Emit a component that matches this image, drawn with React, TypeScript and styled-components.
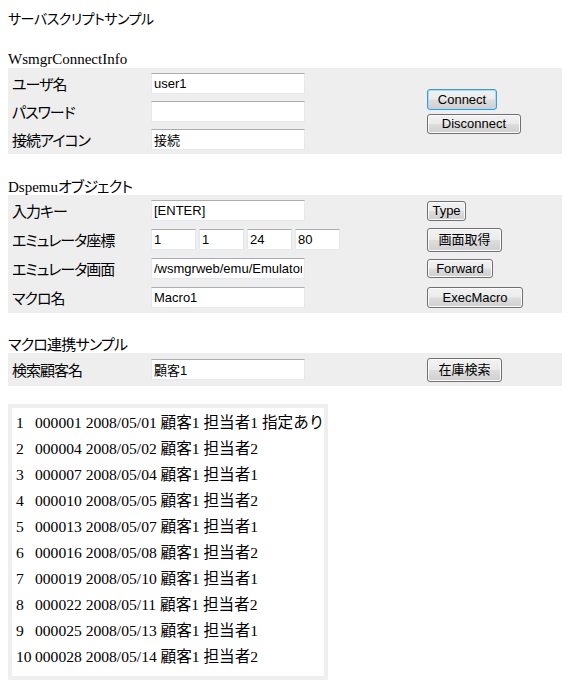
import React from 'react';
import styled, { createGlobalStyle } from 'styled-components';

const GlobalStyle = createGlobalStyle`
  body {
    margin: 8px;
    background: #ffffff;
    color: #000000;
    font-family: 'Liberation Serif', 'Noto Sans CJK JP', serif;
    font-size: 15px;
  }
`;

const Page = styled.div`
  display: flex;
  flex-direction: column;
  align-items: flex-start;
`;

const Title = styled.div`
  font-family: 'Noto Sans CJK JP', sans-serif;
  font-feature-settings: 'palt';
  font-size: 14px;
  letter-spacing: -0.5px;
  line-height: 20px;
`;

const Heading = styled.div<{ $top: number }>`
  margin-top: ${({ $top }) => $top}px;
  height: 18px;
  font-size: 15px;
  line-height: 18px;
  font-feature-settings: 'palt';
`;

const Jp = styled.span`
  font-family: 'Noto Sans CJK JP', sans-serif;
  letter-spacing: -0.8px;
`;

const FormTable = styled.div<{ $rowH: number }>`
  align-self: stretch;
  display: grid;
  grid-template-columns: 139px 276px 1fr;
  grid-auto-rows: ${({ $rowH }) => $rowH}px;
  row-gap: 2px;
  padding: 2px 0 2px 4px;
  background: #eeeeee;
`;

const Label = styled.div`
  display: flex;
  align-items: center;
  font-family: 'Noto Sans CJK JP', sans-serif;
  font-feature-settings: 'palt';
  font-size: 15px;
  letter-spacing: -1px;
  white-space: nowrap;
`;

const Field = styled.div`
  display: flex;
  align-items: center;
  gap: 3px;
`;

const TextBox = styled.input<{ $w?: number }>`
  box-sizing: border-box;
  width: ${({ $w }) => $w ?? 154}px;
  height: 21px;
  margin: 0;
  padding: 0 2px;
  border: 1px solid #e3e9ef;
  border-top-color: #abadb3;
  background: #ffffff;
  font-family: 'Liberation Sans', 'Noto Sans CJK JP', sans-serif;
  font-size: 13px;
  color: #000000;
  outline: none;
`;

const ButtonCell = styled.div<{ $span?: number }>`
  grid-row: ${({ $span }) => ($span ? `span ${$span}` : 'auto')};
  display: flex;
  flex-direction: column;
  justify-content: center;
  align-items: flex-start;
  gap: 4px;
`;

const Btn = styled.button<{ $w: number; $h?: number; $focused?: boolean }>`
  box-sizing: border-box;
  width: ${({ $w }) => $w}px;
  height: ${({ $h }) => $h ?? 21}px;
  margin: 0;
  padding: 0;
  border: 1px solid ${({ $focused }) => ($focused ? '#3c9ad6' : '#707070')};
  border-radius: 3px;
  background: linear-gradient(#f2f2f2 0%, #ebebeb 48%, #dddddd 52%, #cfcfcf 100%);
  box-shadow: ${({ $focused }) => ($focused ? 'inset 0 0 0 1px #a9dbf6' : 'inset 0 0 0 1px #fcfcfc')};
  font-family: 'Liberation Sans', 'Noto Sans CJK JP', sans-serif;
  font-size: 13px;
  color: #000000;
  line-height: 1;
`;

const ResultBox = styled.div`
  margin-top: 18px;
  box-sizing: border-box;
  width: 320px;
  border: 4px solid #efefef;
  padding: 2px 4px 6px 4px;
  display: flex;
  flex-direction: column;
  font-family: 'Liberation Serif', 'Noto Sans CJK JP', serif;
  font-size: 15.6px;
`;

const ResultRow = styled.div`
  display: flex;
  align-items: baseline;
  height: 26px;
  line-height: 26px;
  white-space: nowrap;
`;

const RowNo = styled.span`
  width: 16px;
  margin-right: 3px;
  flex: none;
`;

const results = [
  ['000001', '2008/05/01', '顧客1', '担当者1', '指定あり'],
  ['000004', '2008/05/02', '顧客1', '担当者2', ''],
  ['000007', '2008/05/04', '顧客1', '担当者1', ''],
  ['000010', '2008/05/05', '顧客1', '担当者2', ''],
  ['000013', '2008/05/07', '顧客1', '担当者1', ''],
  ['000016', '2008/05/08', '顧客1', '担当者2', ''],
  ['000019', '2008/05/10', '顧客1', '担当者1', ''],
  ['000022', '2008/05/11', '顧客1', '担当者2', ''],
  ['000025', '2008/05/13', '顧客1', '担当者1', ''],
  ['000028', '2008/05/14', '顧客1', '担当者2', ''],
];

export default function App() {
  return (
    <Page>
      <GlobalStyle />
      <Title>サーバスクリプトサンプル</Title>

      <Heading $top={22}>WsmgrConnectInfo</Heading>
      <FormTable $rowH={26}>
        <Label>ユーザ名</Label>
        <Field>
          <TextBox defaultValue="user1" />
        </Field>
        <ButtonCell $span={3}>
          <Btn $w={70} $focused>Connect</Btn>
          <Btn $w={94} $h={20}>Disconnect</Btn>
        </ButtonCell>
        <Label>パスワード</Label>
        <Field>
          <TextBox type="password" />
        </Field>
        <Label>接続アイコン</Label>
        <Field>
          <TextBox defaultValue="接続" />
        </Field>
      </FormTable>

      <Heading $top={23}>
        Dspemu<Jp>オブジェクト</Jp>
      </Heading>
      <FormTable $rowH={27}>
        <Label>入力キー</Label>
        <Field>
          <TextBox defaultValue="[ENTER]" />
        </Field>
        <ButtonCell>
          <Btn $w={39} $h={20}>Type</Btn>
        </ButtonCell>
        <Label>エミュレータ座標</Label>
        <Field>
          <TextBox $w={45} defaultValue="1" />
          <TextBox $w={45} defaultValue="1" />
          <TextBox $w={45} defaultValue="24" />
          <TextBox $w={45} defaultValue="80" />
        </Field>
        <ButtonCell>
          <Btn $w={75} $h={24}>画面取得</Btn>
        </ButtonCell>
        <Label>エミュレータ画面</Label>
        <Field>
          <TextBox defaultValue="/wsmgrweb/emu/Emulator" />
        </Field>
        <ButtonCell>
          <Btn $w={66} $h={19}>Forward</Btn>
        </ButtonCell>
        <Label>マクロ名</Label>
        <Field>
          <TextBox defaultValue="Macro1" />
        </Field>
        <ButtonCell>
          <Btn $w={96}>ExecMacro</Btn>
        </ButtonCell>
      </FormTable>

      <Heading $top={22}>
        <Jp>マクロ連携サンプル</Jp>
      </Heading>
      <FormTable $rowH={29}>
        <Label>検索顧客名</Label>
        <Field>
          <TextBox defaultValue="顧客1" />
        </Field>
        <ButtonCell>
          <Btn $w={75} $h={24}>在庫検索</Btn>
        </ButtonCell>
      </FormTable>

      <ResultBox>
        {results.map((r, i) => (
          <ResultRow key={r[0]}>
            <RowNo>{i + 1}</RowNo>
            {r.filter(Boolean).join(' ')}
          </ResultRow>
        ))}
      </ResultBox>
    </Page>
  );
}
